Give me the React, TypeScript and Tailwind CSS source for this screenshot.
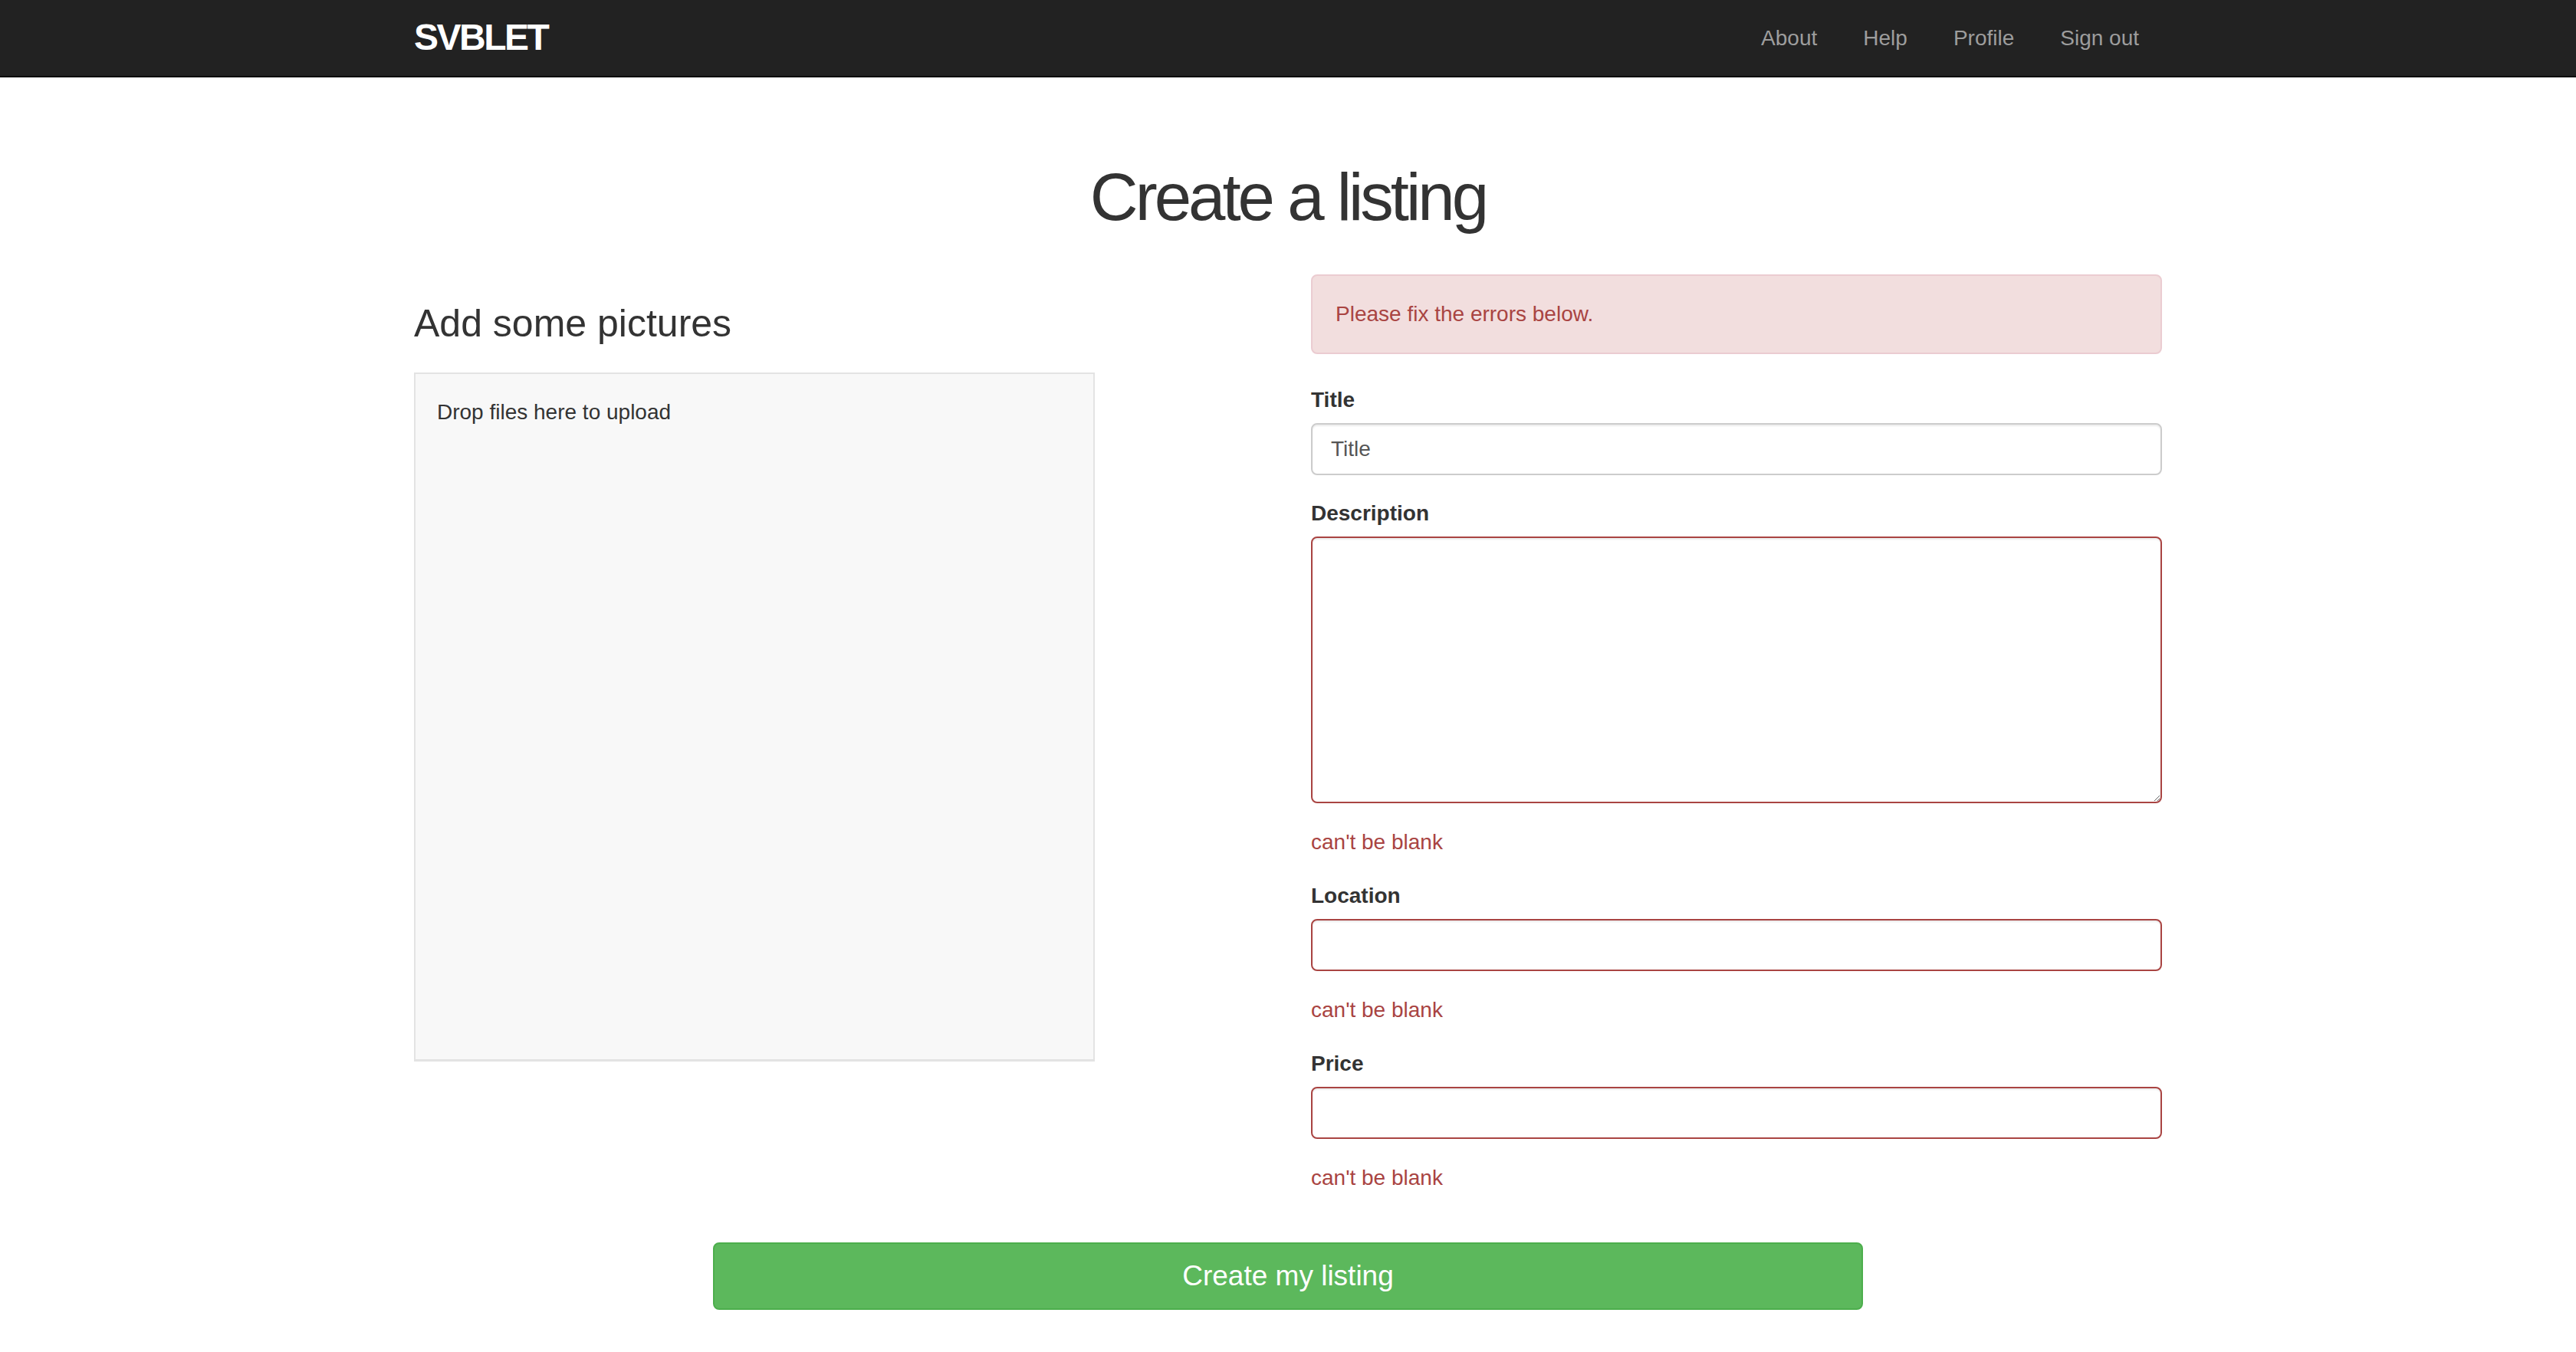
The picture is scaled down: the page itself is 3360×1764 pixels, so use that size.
import { useState } from "react";

const navLinks = ["About", "Help", "Profile", "Sign out"];

const ErrorText = () => (
  <p className="text-[28px] leading-[40px] text-[#a94442] mt-[31px] mb-[30px]">can't be blank</p>
);

const Label = ({ children }: { children: React.ReactNode }) => (
  <label className="block text-[28px] leading-[40px] font-bold text-[#333] mb-[10px]">{children}</label>
);

const inputBase =
  "block w-full h-[68px] rounded-[8px] border-2 bg-white px-[24px] text-[28px] text-[#555] outline-none shadow-[inset_0_2px_2px_rgba(0,0,0,0.075)]";

const App = () => {
  const [title, setTitle] = useState("");

  return (
    <div className="min-h-screen bg-white font-['Liberation_Sans',Arial,sans-serif] text-[#333]">
      <header className="h-[101px] bg-[#222] border-b-2 border-[#080808]">
        <div className="w-[2280px] mx-auto h-full flex items-center justify-between">
          <a className="text-[48px] font-bold uppercase tracking-[-2.5px] text-white leading-none -mt-[2px]">svblet</a>
          <nav className="flex">
            {navLinks.map((link) => (
              <a key={link} className="px-[30px] text-[28px] leading-[40px] text-[#9d9d9d]">
                {link}
              </a>
            ))}
          </nav>
        </div>
      </header>

      <main className="w-[2280px] mx-auto">
        <h1 className="text-center text-[87px] leading-[92px] tracking-[-4px] text-[#333] mt-[110px] mb-[55px]">
          Create a listing
        </h1>

        <div className="grid grid-cols-2 gap-x-[60px]">
          <div>
            <h3 className="text-[50px] leading-[53px] text-[#333] mt-[38px]">Add some pictures</h3>
            <div className="mt-[37px] w-[80%] h-[899px] bg-[#f8f8f8] border-2 border-[#e3e3e3] border-b-[3px] px-[28px] py-[30px]">
              <p className="text-[28px] leading-[40px] text-[#333]">Drop files here to upload</p>
            </div>
          </div>

          <div className="flex flex-col">
            <div className="h-[104px] rounded-[8px] border-2 border-[#ebccd1] bg-[#f2dede] px-[30px] flex items-center text-[28px] text-[#a94442] mb-[40px]">
              Please fix the errors below.
            </div>

            <Label>Title</Label>
            <input
              value={title}
              onChange={(e) => setTitle(e.target.value)}
              placeholder="Title"
              className={`${inputBase} border-[#ccc] placeholder:text-[#555] mb-[30px]`}
            />

            <Label>Description</Label>
            <textarea className="block w-full h-[348px] rounded-[8px] border-2 border-[#a94442] bg-white px-[24px] py-[12px] text-[28px] outline-none shadow-[inset_0_2px_2px_rgba(0,0,0,0.075)]" />
            <ErrorText />

            <Label>Location</Label>
            <input className={`${inputBase} border-[#a94442]`} />
            <ErrorText />

            <Label>Price</Label>
            <input className={`${inputBase} border-[#a94442]`} />
            <p className="text-[28px] leading-[40px] text-[#a94442] mt-[31px]">can't be blank</p>
          </div>
        </div>

        <div className="flex justify-center mt-[64px] pb-[56px]">
          <button className="w-[1500px] h-[88px] rounded-[8px] border-2 border-[#4cae4c] bg-[#5cb85c] text-white text-[37px]">
            Create my listing
          </button>
        </div>
      </main>
    </div>
  );
};

export default App;
